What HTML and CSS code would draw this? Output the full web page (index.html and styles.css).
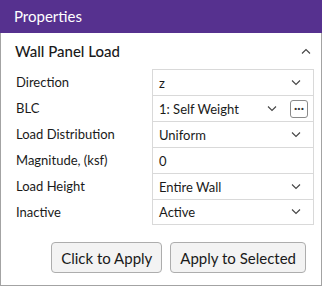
FILE: index.html
```html
<!DOCTYPE html>
<html lang="en">
<head>
<meta charset="utf-8">
<title>Properties</title>
<link rel="stylesheet" href="styles.css">
</head>
<body>
<div class="panel">
	<div class="panel-header">Properties</div>
	<div class="section-head">
		<span class="section-title">Wall Panel Load</span>
		<svg class="chev" width="10" height="6" viewBox="0 0 10 6"><path d="M1 5.5 L5 1.5 L9 5.5" fill="none" stroke="#444" stroke-width="1.1"/></svg>
	</div>
	<div class="props">
		<div class="row">
			<div class="label">Direction</div>
			<div class="value"><span class="text">z</span><svg class="chev" width="10" height="6" viewBox="0 0 10 6"><path d="M1 0.5 L5 4.5 L9 0.5" fill="none" stroke="#444" stroke-width="1.1"/></svg></div>
		</div>
		<div class="row">
			<div class="label">BLC</div>
			<div class="value"><span class="text">1: Self Weight</span><svg class="chev" width="10" height="6" viewBox="0 0 10 6"><path d="M1 0.5 L5 4.5 L9 0.5" fill="none" stroke="#444" stroke-width="1.1"/></svg><span class="more">&middot;&middot;&middot;</span></div>
		</div>
		<div class="row">
			<div class="label">Load Distribution</div>
			<div class="value"><span class="text">Uniform</span><svg class="chev" width="10" height="6" viewBox="0 0 10 6"><path d="M1 0.5 L5 4.5 L9 0.5" fill="none" stroke="#444" stroke-width="1.1"/></svg></div>
		</div>
		<div class="row">
			<div class="label">Magnitude, (ksf)</div>
			<div class="value"><span class="text">0</span></div>
		</div>
		<div class="row">
			<div class="label">Load Height</div>
			<div class="value"><span class="text">Entire Wall</span><svg class="chev" width="10" height="6" viewBox="0 0 10 6"><path d="M1 0.5 L5 4.5 L9 0.5" fill="none" stroke="#444" stroke-width="1.1"/></svg></div>
		</div>
		<div class="row last">
			<div class="label">Inactive</div>
			<div class="value"><span class="text">Active</span><svg class="chev" width="10" height="6" viewBox="0 0 10 6"><path d="M1 0.5 L5 4.5 L9 0.5" fill="none" stroke="#444" stroke-width="1.1"/></svg></div>
		</div>
	</div>
	<div class="actions">
		<button class="btn">Click to Apply</button>
		<button class="btn">Apply to Selected</button>
	</div>
</div>
</body>
</html>
```

FILE: styles.css
```css
body {
	margin: 0;
	font-family: "Lato", "Noto Sans", sans-serif;
	color: #1a1a1a;
}
.panel {
	width: 322px;
	height: 286px;
	box-sizing: border-box;
	border: 1px solid #a3a3a3;
	border-top: none;
	background: #fff;
}
.panel-header {
	height: 33px;
	margin: 0 -1px;
	padding-left: 14px;
	background: #56318f;
	color: #fff;
	font-size: 15px;
	line-height: 32px;
}
.section-head {
	display: flex;
	align-items: center;
	justify-content: space-between;
	height: 36px;
	padding: 0 10px 0 14px;
}
.section-title {
	font-size: 15px;
	font-weight: 500;
}
.props {
	margin: 0 7px 0 15px;
}
.row {
	display: flex;
	height: 26px;
	font-size: 13px;
}
.label {
	width: 136px;
	line-height: 26px;
}
.value {
	flex: 1;
	display: flex;
	align-items: center;
	padding: 0 12px 0 6px;
	border: 1px solid #d9d9d9;
	border-bottom: none;
}
.row.last .value {
	border-bottom: 1px solid #d9d9d9;
}
.value .text {
	flex: 1;
}
.more {
	width: 16px;
	height: 16px;
	margin: 0 -7px 0 13px;
	border: 1px solid #8a8a8a;
	border-radius: 3px;
	font-size: 12px;
	line-height: 14px;
	text-align: center;
	font-weight: bold;
	color: #333;
}
.actions {
	display: flex;
	justify-content: flex-end;
	gap: 8px;
	padding: 17px 15px 0 0;
}
.btn {
	height: 31px;
	padding: 0 9px;
	background: #f3f3f3;
	border: 1px solid #adadad;
	border-radius: 4px;
	font-family: inherit;
	font-size: 15px;
	color: #1a1a1a;
}
```
